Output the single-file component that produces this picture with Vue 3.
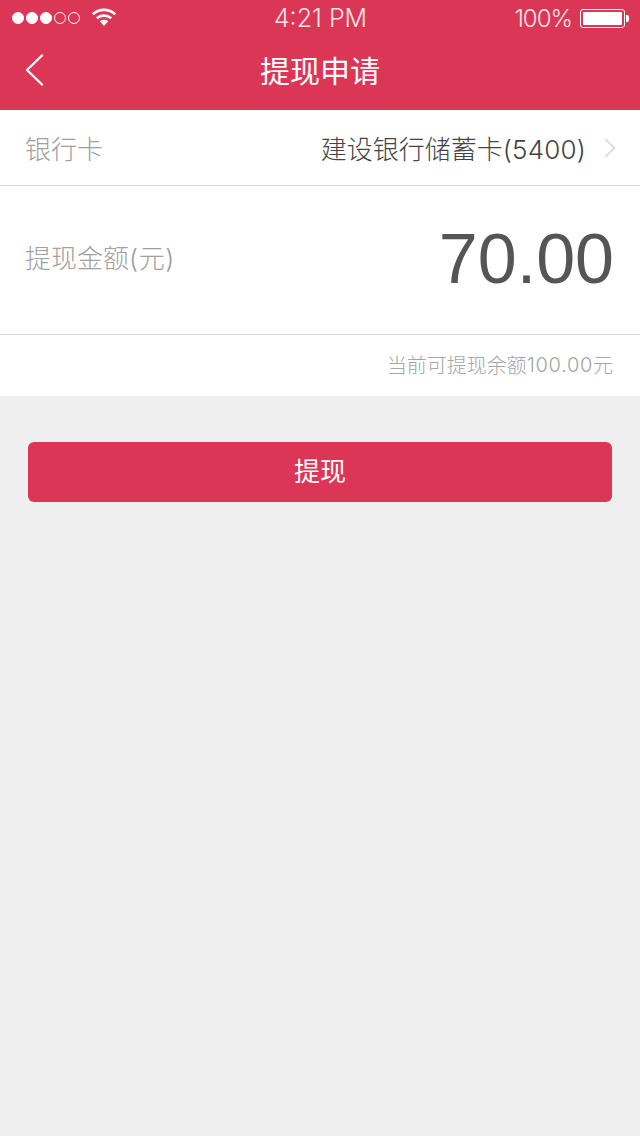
<script setup>
const dots = [true, true, true, false, false]
</script>

<template>
  <div class="page">
    <header class="header">
      <div class="status">
        <div class="status-left">
          <div class="signal">
            <span v-for="(on, i) in dots" :key="i" class="dot" :class="{ on }"></span>
          </div>
          <svg class="wifi" width="26" height="20" viewBox="0 0 26 20">
            <path d="M1.8 7.2C8 1.4 18 1.4 24.2 7.2" fill="none" stroke="#fff" stroke-width="2.6" />
            <path d="M5.8 11.2C9.8 7.8 16.2 7.8 20.2 11.2" fill="none" stroke="#fff" stroke-width="2.6" />
            <path d="M8.8 14.2C11.2 12.4 14.8 12.4 17.2 14.2L13 19Z" fill="#fff" />
          </svg>
        </div>
        <div class="clock">4:21 PM</div>
        <div class="status-right">
          <span class="percent">100%</span>
          <span class="battery"><span class="level"></span></span>
          <span class="nub"></span>
        </div>
      </div>
      <div class="nav">
        <svg class="back" width="20" height="32" viewBox="0 0 20 32">
          <path d="M18 1.5L3 16L18 30.5" fill="none" stroke="#fff" stroke-width="2.4" stroke-linecap="round" stroke-linejoin="round" />
        </svg>
        <h1 class="title">提现申请</h1>
      </div>
    </header>

    <section class="card">
      <div class="row bank">
        <span class="label">银行卡</span>
        <span class="bank-value">建设银行储蓄卡<span class="bank-no">(5400)</span></span>
        <svg class="chevron" width="12" height="20" viewBox="0 0 12 20">
          <path d="M1.5 1.5L10.5 10L1.5 18.5" fill="none" stroke="#dcdcdc" stroke-width="1.8" />
        </svg>
      </div>
      <div class="row amount">
        <span class="label amount-label">提现金额<span class="unit">(元)</span></span>
        <span class="amount-value">70.00</span>
      </div>
      <div class="row balance">当前可提现余额<span class="balance-no">100.00</span>元</div>
    </section>

    <div class="actions">
      <button class="submit" type="button">提现</button>
    </div>
  </div>
</template>

<style scoped>
.page {
  height: 1136px;
  background: #efefef;
  font-family: "Inter", "Noto Sans CJK SC", sans-serif;
  font-weight: 300;
  overflow: hidden;
}
.header {
  height: 110px;
  background: #db3655;
  color: #fff;
}
.status {
  height: 40px;
  display: grid;
  grid-template-columns: 1fr auto 1fr;
  align-items: center;
  padding: 0 11px 4px 12px;
  box-sizing: border-box;
}
.status-left {
  display: flex;
  align-items: center;
  gap: 11px;
}
.signal {
  display: flex;
  gap: 2px;
}
.dot {
  width: 12px;
  height: 12px;
  border-radius: 50%;
  border: 1px solid #fff;
  box-sizing: border-box;
}
.dot.on {
  background: #fff;
}
.wifi {
  margin-top: -3px;
}
.clock {
  font-size: 25px;
  color: #fbe4e8;
}
.status-right {
  display: flex;
  align-items: center;
  justify-content: flex-end;
}
.percent {
  font-size: 24px;
  letter-spacing: -1px;
  color: #fbe4e8;
  margin-right: 8px;
}
.battery {
  width: 45px;
  height: 19px;
  border: 1px solid #fff;
  border-radius: 3px;
  padding: 2px;
  box-sizing: border-box;
  display: block;
}
.level {
  display: block;
  height: 100%;
  background: #fff;
  border-radius: 1px;
}
.nub {
  width: 3px;
  height: 7px;
  margin-left: 1px;
  background: #fff;
  border-radius: 0 2px 2px 0;
}
.nav {
  height: 70px;
  position: relative;
  display: flex;
  align-items: center;
  justify-content: center;
}
.back {
  position: absolute;
  left: 24px;
  top: 14px;
}
.title {
  margin: 0 0 8px;
  font-size: 30px;
  font-weight: 400;
  line-height: 40px;
}
.card {
  background: #fff;
}
.row {
  display: flex;
  align-items: center;
  box-sizing: border-box;
}
.bank {
  height: 76px;
  padding: 0 25px;
  border-bottom: 1px solid #dddddd;
}
.label {
  font-size: 26px;
  color: #a0a0a0;
}
.amount-label {
  margin-top: -7px;
}
.unit {
  letter-spacing: 0.6px;
}
.bank-value {
  margin-left: auto;
  font-size: 26px;
  color: #444;
}
.bank-no {
  letter-spacing: 0.2px;
}
.chevron {
  margin-left: 18px;
  margin-right: -1px;
}
.amount {
  height: 149px;
  padding: 0 26px 0 25px;
  justify-content: space-between;
  border-bottom: 1px solid #dddddd;
}
.amount-value {
  font-family: "Liberation Sans", sans-serif;
  font-weight: 400;
  font-size: 70px;
  color: #555;
  margin-top: -3px;
}
.balance {
  height: 61px;
  padding: 0 27px 2px;
  justify-content: flex-end;
  font-size: 20px;
  color: #a5a5a5;
}
.balance-no {
  letter-spacing: 0.7px;
}
.actions {
  padding: 46px 28px 0;
}
.submit {
  display: block;
  width: 100%;
  height: 60px;
  padding: 0 0 5px;
  border: 0;
  border-radius: 6px;
  background: #db3655;
  color: #fff;
  font-family: inherit;
  font-size: 26px;
  font-weight: 400;
}
</style>
